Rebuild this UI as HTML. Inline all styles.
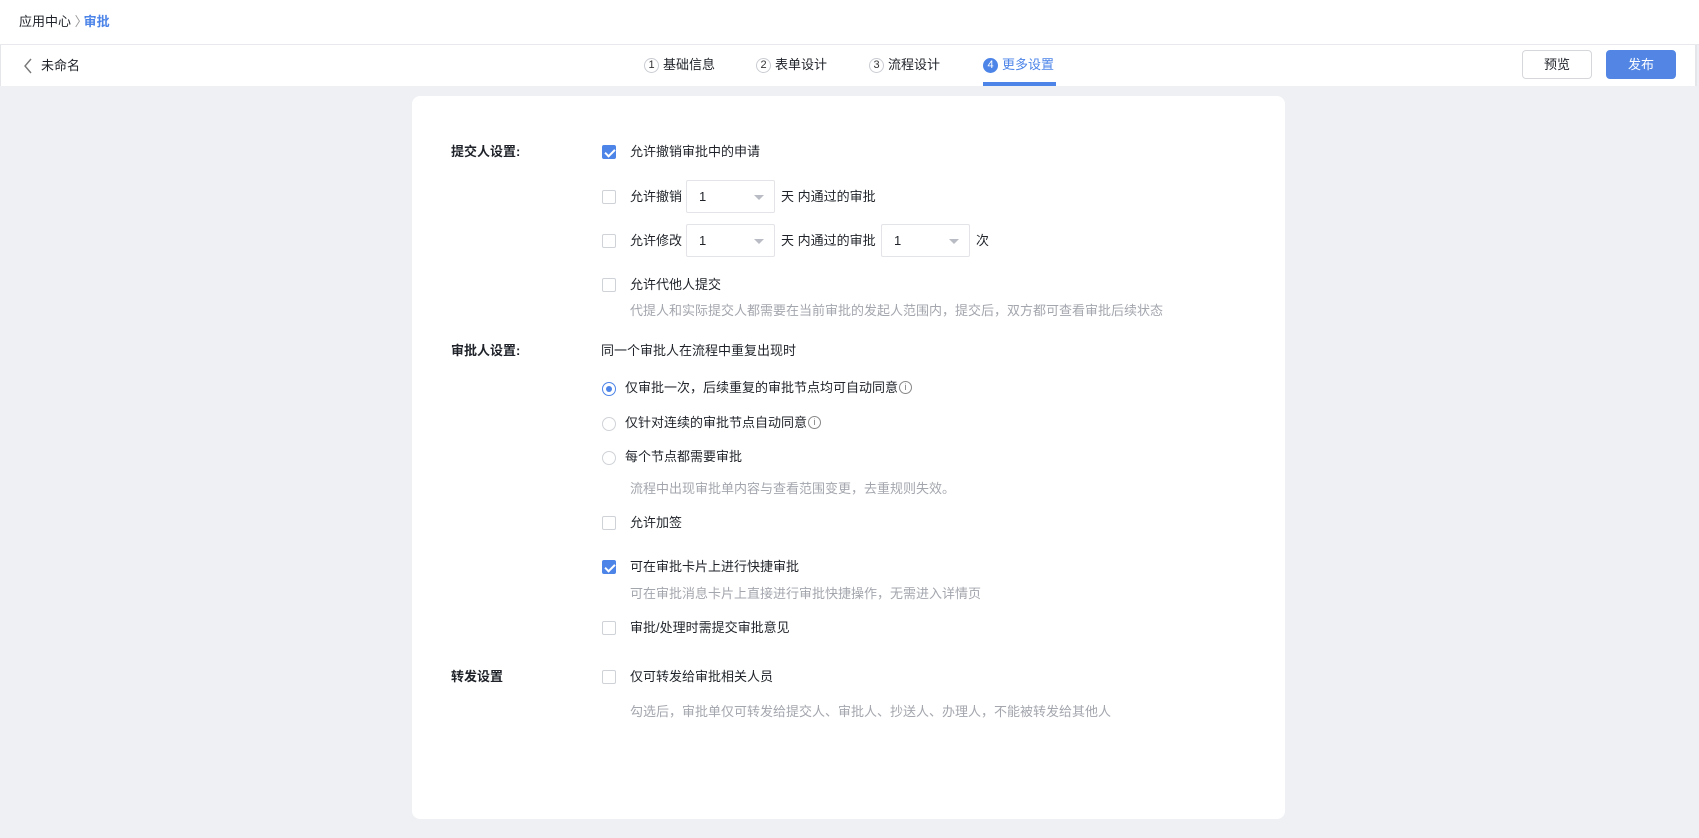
<!DOCTYPE html>
<html><head><meta charset="utf-8"><style>
*{box-sizing:border-box;margin:0;padding:0}
body{width:1699px;height:838px;background:#eef0f4;font-family:"Liberation Sans","Noto Sans CJK SC",sans-serif;font-size:13px;color:#1f2329;position:relative;overflow:hidden}
.abs{position:absolute;white-space:nowrap;line-height:16px}
.top{position:absolute;left:0;top:0;width:1699px;height:45px;background:#fff;border-bottom:1px solid #e8e9ec}
.nav{position:absolute;left:0;top:45px;width:1697px;height:41px;background:#fff;border-left:1px solid #e5e6ea;border-right:2px solid #e5e6ea}
.num{display:inline-block;width:15px;height:15px;border:1px solid #c9ccd2;border-radius:50%;font-size:11px;line-height:13px;text-align:center;margin-right:4px;color:#333;vertical-align:top;margin-top:1px}
.btn{position:absolute;top:50px;height:29px;border-radius:4px;text-align:center;line-height:27px;font-size:13px}
.card{position:absolute;left:412px;top:96px;width:873px;height:723px;background:#fff;border-radius:8px}
.lbl{font-weight:bold}
.cb{position:absolute;width:14px;height:14px;border:1px solid #cfd2d7;border-radius:2px;background:#fff}
.cb.on{background:#4c84e8;border-color:#4c84e8}
.cb.on:after{content:"";position:absolute;left:4px;top:1px;width:4px;height:8px;border:solid #fff;border-width:0 2px 2px 0;transform:rotate(45deg)}
.rd{position:absolute;width:14px;height:14px;border:1px solid #cfd2d7;border-radius:50%}
.rd.on{border-color:#4c84e8}
.rd.on:after{content:"";position:absolute;left:3px;top:3px;width:6px;height:6px;border-radius:50%;background:#4c84e8}
.sel{position:absolute;width:89px;height:33px;border:1px solid #e2e4e8;border-radius:2px;padding-left:12px;line-height:31px}
.sel:after{content:"";position:absolute;right:10px;top:14px;border:5px solid transparent;border-top:5px solid #b9bcc4;border-bottom:0}
.gray{color:#a3a6ad}
.info{display:inline-block;width:13px;height:13px;border:1px solid #888;border-radius:50%;font-size:9px;line-height:11px;text-align:center;color:#777;vertical-align:top;margin-top:1px;font-style:normal;margin-left:1px}
</style></head><body>
<div class="top"></div>
<div class="abs" style="left:19px;top:14px">应用中心 <span style="color:#999">〉</span><span style="color:#4c84e8;font-weight:bold;margin-left:-4px">审批</span></div>
<div class="nav"></div>
<svg class="abs" style="left:23px;top:58px" width="10" height="16" viewBox="0 0 10 16"><path d="M8 1L2 8l6 7" fill="none" stroke="#777" stroke-width="1.4"/></svg>
<div class="abs" style="left:41px;top:58px">未命名</div>
<div class="abs" style="left:644px;top:57px"><span class="num">1</span>基础信息</div>
<div class="abs" style="left:756px;top:57px"><span class="num">2</span>表单设计</div>
<div class="abs" style="left:869px;top:57px"><span class="num">3</span>流程设计</div>
<div class="abs" style="left:983px;top:57px;color:#4c84e8"><span class="num" style="background:#4c84e8;border-color:#4c84e8;color:#fff">4</span>更多设置</div>
<div class="abs" style="left:983px;top:82px;width:73px;height:4px;background:#4c84e8"></div>
<div class="btn" style="left:1522px;width:70px;border:1px solid #d5d7db;background:#fff">预览</div>
<div class="btn" style="left:1606px;width:70px;background:#5386e4;color:#fff;border:1px solid #5386e4">发布</div>
<div class="card"></div>

<div class="abs lbl" style="left:451px;top:144px">提交人设置:</div>
<div class="cb on" style="left:602px;top:145px"></div><div class="abs" style="left:630px;top:144px">允许撤销审批中的申请</div>

<div class="cb" style="left:602px;top:190px"></div><div class="abs" style="left:630px;top:189px">允许撤销</div>
<div class="sel" style="left:686px;top:180px">1</div><div class="abs" style="left:781px;top:189px">天 内通过的审批</div>

<div class="cb" style="left:602px;top:234px"></div><div class="abs" style="left:630px;top:233px">允许修改</div>
<div class="sel" style="left:686px;top:224px">1</div><div class="abs" style="left:781px;top:233px">天 内通过的审批</div>
<div class="sel" style="left:881px;top:224px">1</div><div class="abs" style="left:976px;top:233px">次</div>

<div class="cb" style="left:602px;top:278px"></div><div class="abs" style="left:630px;top:277px">允许代他人提交</div>
<div class="abs gray" style="left:630px;top:303px">代提人和实际提交人都需要在当前审批的发起人范围内，提交后，双方都可查看审批后续状态</div>

<div class="abs lbl" style="left:451px;top:343px">审批人设置:</div>
<div class="abs" style="left:601px;top:343px">同一个审批人在流程中重复出现时</div>
<div class="rd on" style="left:602px;top:382px"></div><div class="abs" style="left:625px;top:380px">仅审批一次，后续重复的审批节点均可自动同意<i class="info">i</i></div>
<div class="rd" style="left:602px;top:417px"></div><div class="abs" style="left:625px;top:415px">仅针对连续的审批节点自动同意<i class="info">i</i></div>
<div class="rd" style="left:602px;top:451px"></div><div class="abs" style="left:625px;top:449px">每个节点都需要审批</div>
<div class="abs gray" style="left:630px;top:481px">流程中出现审批单内容与查看范围变更，去重规则失效。</div>

<div class="cb" style="left:602px;top:516px"></div><div class="abs" style="left:630px;top:515px">允许加签</div>
<div class="cb on" style="left:602px;top:560px"></div><div class="abs" style="left:630px;top:559px">可在审批卡片上进行快捷审批</div>
<div class="abs gray" style="left:630px;top:586px">可在审批消息卡片上直接进行审批快捷操作，无需进入详情页</div>
<div class="cb" style="left:602px;top:621px"></div><div class="abs" style="left:630px;top:620px">审批/处理时需提交审批意见</div>

<div class="abs lbl" style="left:451px;top:669px">转发设置</div>
<div class="cb" style="left:602px;top:670px"></div><div class="abs" style="left:630px;top:669px">仅可转发给审批相关人员</div>
<div class="abs gray" style="left:630px;top:704px">勾选后，审批单仅可转发给提交人、审批人、抄送人、办理人，不能被转发给其他人</div>
</body></html>
